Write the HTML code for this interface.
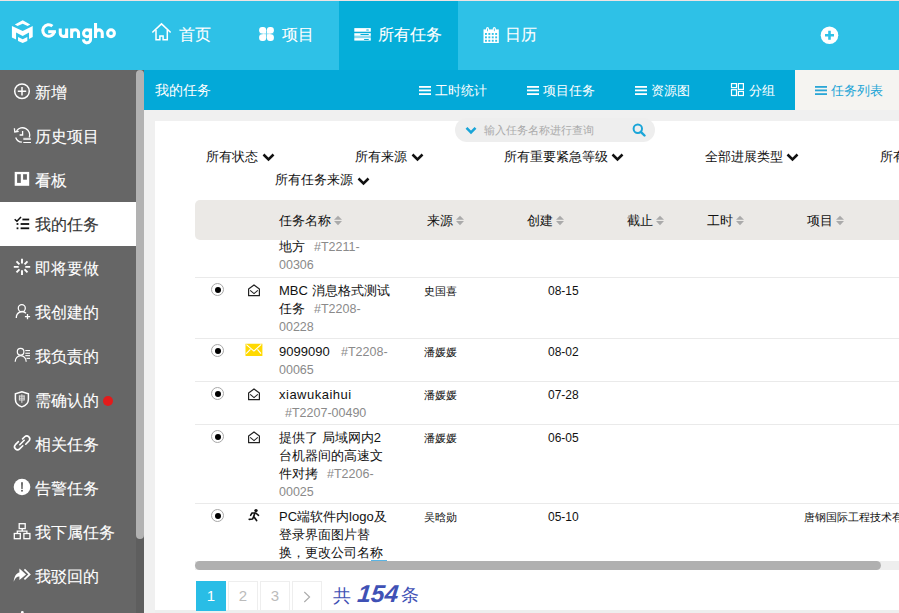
<!DOCTYPE html>
<html><head><meta charset="utf-8">
<style>
*{box-sizing:border-box}
html,body{margin:0;padding:0}
body{width:899px;height:613px;overflow:hidden;position:relative;background:#f0f0f0;font-family:"Liberation Sans",sans-serif;color:#333}
.abs{position:absolute}
#topline{left:0;top:0;width:899px;height:1px;background:#eee3e3}
#hdr{left:0;top:1px;width:899px;height:69px;background:#2ec1e7}
#hdr .act{position:absolute;left:339px;top:0;width:119px;height:69px;background:#05aed9}
.nav{position:absolute;color:#fff;font-size:16px;line-height:20px;white-space:nowrap}
#side{left:0;top:70px;width:136px;height:543px;background:#666}
#sbtrack{left:136px;top:70px;width:8px;height:543px;background:#5e5e5e}
#sbthumb{left:136px;top:70px;width:8px;height:469px;background:#b2b2b2;border-radius:4px}
.si{position:absolute;left:0;width:136px;height:44px;color:#fff;font-size:16px}
.si .t{position:absolute;left:35px;top:13px;line-height:20px;white-space:nowrap}
.si svg{position:absolute}
.si.on{background:#fff;color:#333}
#sub{left:144px;top:70px;width:755px;height:40px;background:#03a9d8}
.st{position:absolute;color:#fff;font-size:14px;line-height:20px;white-space:nowrap;top:10px}
#tabon{left:795px;top:70px;width:104px;height:40px;background:#f5f4f1}
#panel{left:155px;top:121px;width:744px;height:489px;background:#fff}
#search{left:455px;top:118px;width:200px;height:24px;border-radius:12px;background:#eeeeee}
.flt{position:absolute;font-size:13px;line-height:20px;color:#111;white-space:nowrap}
.flt svg{position:absolute}
#thead{left:195px;top:200px;width:720px;height:40px;border-radius:5px;background:#ebe9e6}
.th{position:absolute;top:211px;font-size:13px;line-height:20px;color:#111;white-space:nowrap}

.sep{position:absolute;left:195px;width:704px;height:1px;background:#eaeaea}
.tt{position:absolute;left:279px;font-size:13px;line-height:18px;color:#111;white-space:nowrap}
.tt.num{color:#8a8a8a;font-size:12.5px}
.src{position:absolute;left:424px;font-size:11px;line-height:16px;color:#111;white-space:nowrap}
.dt{position:absolute;left:548px;font-size:12px;line-height:16px;color:#111;white-space:nowrap}
.radio{position:absolute;left:211px;width:13px;height:13px;border-radius:50%;border:1px solid #a8a8a8;background:#fff}
.radio:after{content:"";position:absolute;left:2.5px;top:2.5px;width:6px;height:6px;border-radius:50%;background:#000}
.ic{position:absolute}
#hscroll{left:195px;top:561px;width:704px;height:9px;background:#eeeeee}
#hthumb{left:195px;top:561px;width:686px;height:9px;border-radius:4.5px;background:#b0b0b0}
.pg{position:absolute;top:581px;width:30px;height:30px;border:1px solid #eee;background:#fff;color:#bbb;font-size:15px;line-height:28px;text-align:center}
.pg.on{background:#29bde6;border-color:#29bde6;color:#fff}
#bottomstrip{left:155px;top:610px;width:744px;height:3px;background:#eeeeee}
.nav,.si .t{-webkit-text-stroke:0.1px currentColor}
.tt.num{-webkit-text-stroke:0}
.l{-webkit-text-stroke:0}
</style></head><body>
<div id="topline" class="abs"></div>
<div id="hdr" class="abs"><div class="act"></div></div>

<!-- logo -->
<svg class="abs" style="left:8px;top:16px" width="30" height="30" viewBox="0 0 613 613">
<polygon fill="#fff" points="140,175 300,85 455,175 400,205 300,160 195,205"/>
<polygon fill="#fff" points="80,205 300,305 505,205 505,430 430,470 430,335 300,410 165,335 165,480 80,440"/>
<polygon fill="#fff" points="205,430 300,475 395,430 395,510 300,550 205,510"/>
</svg>
<svg class="abs" style="left:0;top:0" width="130" height="60" viewBox="0 0 130 60"><g fill="none" stroke="#fff" stroke-width="3.05">
<path d="M52.4 26.2 A5.75 5.75 0 1 0 54.25 31.4"/><path d="M48.2 31.7 H55.9"/>
<path d="M60.25 28.4 V33.25 A3.2 3.2 0 0 0 66.65 33.25 M66.65 28.4 V38.1"/>
<path d="M71.65 38.1 V28.4 M71.65 33.2 A3.45 3.45 0 0 1 78.55 33.2 V38.1"/>
<circle cx="87.05" cy="33.2" r="3.5"/><path d="M90.55 28.4 V39.2 A3.55 3.55 0 0 1 83.45 39.4"/>
<path d="M95.55 23.1 V38.1 M95.55 33.2 A3.35 3.35 0 0 1 102.25 33.2 V38.1"/>
<circle cx="111" cy="33.2" r="3.4"/>
</g></svg>

<!-- nav -->
<svg class="abs" style="left:148px;top:19px" width="28" height="28" viewBox="0 0 28 28"><path d="M4.8 13 L13.5 4.9 L22.2 13" fill="none" stroke="#fff" stroke-width="1.6" stroke-linecap="round"/><path d="M8 11 V20.8 H11.9 V16.9 H15.1 V20.8 H19.3 V11" fill="none" stroke="#fff" stroke-width="1.5"/></svg>
<div class="nav" style="left:179px;top:25px">首页</div>
<svg class="abs" style="left:254px;top:22px" width="26" height="26" viewBox="0 0 26 26"><g fill="#fff"><rect x="5.1" y="4.9" width="7.1" height="6.7" rx="3"/><rect x="8.7" y="8.1" width="3.5" height="3.5"/><rect x="12.9" y="4.9" width="7" height="6.7" rx="3"/><rect x="12.9" y="8.1" width="3.5" height="3.5"/><rect x="5.1" y="12.2" width="7.1" height="6.7" rx="3"/><rect x="8.7" y="12.2" width="3.5" height="3.5"/><rect x="12.9" y="12.2" width="7" height="6.7" rx="3"/><rect x="12.9" y="12.2" width="3.5" height="3.5"/></g><rect x="5.1" y="11.6" width="14.8" height="0.6" fill="#fff" opacity="0.4"/></svg>
<div class="nav" style="left:282px;top:25px">项目</div>
<svg class="abs" style="left:349px;top:22px" width="26" height="26" viewBox="0 0 26 26"><g fill="#fff"><rect x="5.3" y="6.1" width="16.5" height="3.6"/><rect x="5.3" y="11.2" width="16.5" height="2.6"/><rect x="5.3" y="16.1" width="16.5" height="2.5"/><rect x="5.3" y="13.8" width="16.5" height="2.3" opacity="0.55"/></g><g fill="#05aed9"><rect x="17.2" y="7.5" width="2.7" height="1" rx="0.5"/><rect x="11.4" y="12" width="8.5" height="1" rx="0.5"/><rect x="15" y="16.9" width="4.9" height="1" rx="0.5"/></g></svg>
<div class="nav" style="left:378px;top:25px">所有任务</div>
<svg class="abs" style="left:478px;top:22px" width="26" height="26" viewBox="0 0 26 26"><g fill="#fff"><rect x="5.5" y="7.4" width="15.3" height="13.6"/><rect x="8" y="5" width="3" height="4.5" rx="1.5"/><rect x="14.8" y="5" width="3" height="4.5" rx="1.5"/></g><g fill="#2fc2e8"><rect x="9.1" y="6.3" width="0.8" height="3" rx="0.4"/><rect x="15.9" y="6.3" width="0.8" height="3" rx="0.4"/><rect x="7" y="11" width="1.9" height="1.9"/><rect x="10.4" y="11" width="1.9" height="1.9"/><rect x="13.8" y="11" width="1.9" height="1.9"/><rect x="17.2" y="11" width="1.9" height="1.9"/><rect x="7" y="14.4" width="1.9" height="1.9"/><rect x="10.4" y="14.4" width="1.9" height="1.9"/><rect x="13.8" y="14.4" width="1.9" height="1.9"/><rect x="17.2" y="14.4" width="1.9" height="1.9"/><rect x="7" y="17.8" width="1.9" height="1.9"/><rect x="10.4" y="17.8" width="1.9" height="1.9"/><rect x="13.8" y="17.8" width="1.9" height="1.9"/><rect x="17.2" y="17.8" width="1.9" height="1.9"/></g></svg>
<div class="nav" style="left:505px;top:25px">日历</div>
<svg class="abs" style="left:820px;top:26px" width="19" height="19" viewBox="0 0 19 19"><circle cx="9.5" cy="9.3" r="8.8" fill="#fff"/><path d="M9.5 4.8 V13.8 M5 9.3 H14" stroke="#2fc2e8" stroke-width="2.6"/></svg>

<!-- sidebar -->
<div id="side" class="abs">
<div class="si" style="top:0px"><svg style="left:10px;top:10px" width="24" height="24" viewBox="0 0 24 24"><circle cx="12" cy="11.2" r="7.3" fill="none" stroke="#fff" stroke-width="1.5"/><path d="M12 7 V15.4 M7.8 11.2 H16.2" stroke="#fff" stroke-width="1.5"/></svg><span class="t">新增</span></div>
<div class="si" style="top:44px"><svg style="left:10px;top:8px" width="24" height="24" viewBox="0 0 24 24"><path d="M6.56 8.84 A7.25 7.25 0 0 1 19.3 15.5" fill="none" stroke="#fff" stroke-width="1.3"/><path d="M5.69 15.48 A7.25 7.25 0 0 0 11.87 20.2" fill="none" stroke="#fff" stroke-width="1.3"/><path d="M4.4 6.3 L4.8 10 L8.7 9.3" fill="none" stroke="#fff" stroke-width="1.3"/><path d="M12.6 9 V13 H9.6" fill="none" stroke="#fff" stroke-width="1.3"/><rect x="13.3" y="15.8" width="7.5" height="2.2" fill="#d8d8d8"/><rect x="13.3" y="20" width="7.7" height="1" fill="#fff"/></svg><span class="t">历史项目</span></div>
<div class="si" style="top:88px"><svg style="left:10px;top:8px" width="24" height="24" viewBox="0 0 24 24"><rect x="4.7" y="5.9" width="14.5" height="13.9" fill="#fff"/><rect x="7.1" y="8.2" width="3.7" height="8.7" fill="#666"/><rect x="13.1" y="8.2" width="3.8" height="5.5" fill="#666"/></svg><span class="t">看板</span></div>
<div class="si on" style="top:132px"><svg style="left:10px;top:10px" width="24" height="24" viewBox="0 0 24 24"><path d="M4.7 7.3 L6.9 9.2 L11 4.9" fill="none" stroke="#111" stroke-width="1.5"/><rect x="6.6" y="11.1" width="1.8" height="1.8" fill="#111"/><rect x="6.6" y="15.4" width="1.8" height="1.8" fill="#111"/><rect x="12.4" y="6.6" width="6.8" height="1.8" fill="#111"/><rect x="10.6" y="11.1" width="8.6" height="1.8" fill="#111"/><rect x="10.6" y="15.4" width="8.6" height="1.8" fill="#111"/></svg><span class="t">我的任务</span></div>
<div class="si" style="top:176px"><svg style="left:10px;top:8px" width="24" height="24" viewBox="0 0 24 24"><g stroke="#fff" stroke-width="1.9" stroke-linecap="butt"><path d="M12 4.7 V9.6 M12 16.2 V21.1 M3.8 12.9 H8.7 M15.3 12.9 H20.2 M6.5 7.4 L9.45 10.35 M17.5 7.4 L14.55 10.35 M6.5 18.4 L9.45 15.45 M17.5 18.4 L14.55 15.45"/></g></svg><span class="t">即将要做</span></div>
<div class="si" style="top:220px"><svg style="left:10px;top:10px" width="24" height="24" viewBox="0 0 24 24"><circle cx="11.8" cy="8.2" r="3.5" fill="none" stroke="#fff" stroke-width="1.3"/><path d="M6.3 18 A5.8 6.3 0 0 1 16 13.2" fill="none" stroke="#fff" stroke-width="1.3"/><path d="M17.5 14 V19.2 M14.9 16.6 H20.1" stroke="#fff" stroke-width="1.3"/></svg><span class="t">我创建的</span></div>
<div class="si" style="top:264px"><svg style="left:10px;top:10px" width="24" height="24" viewBox="0 0 24 24"><circle cx="10.6" cy="7.7" r="3.3" fill="none" stroke="#fff" stroke-width="1.2"/><path d="M5.2 17.8 A5.5 6.2 0 0 1 16.2 17.8" fill="none" stroke="#fff" stroke-width="1.2"/><g fill="#fff"><rect x="15.3" y="6" width="4.7" height="1.1"/><rect x="15.3" y="8.7" width="4.7" height="1.1"/><rect x="15.3" y="11.1" width="4.7" height="1.1"/><rect x="16.5" y="13.8" width="3.5" height="1.1"/></g></svg><span class="t">我负责的</span></div>
<div class="si" style="top:308px"><svg style="left:10px;top:10px" width="24" height="24" viewBox="0 0 24 24"><path d="M11.8 3.7 L18.4 5.9 V11.3 C18.4 15.1 15 17.9 11.8 18.9 C8.6 17.9 5.4 15.1 5.4 11.3 V5.9 Z" fill="none" stroke="#fff" stroke-width="1.5"/><g fill="#d8d8d8"><rect x="8.9" y="7.5" width="5.8" height="1.2"/><rect x="8.9" y="7.5" width="1.1" height="4.6"/><rect x="13.6" y="7.5" width="1.1" height="4.6"/><rect x="8.9" y="9.7" width="5.8" height="1"/><rect x="8.9" y="11.5" width="5.8" height="1"/><rect x="11.3" y="6.3" width="1.1" height="8.5"/></g></svg><span class="t">需确认的</span><span style="position:absolute;left:103px;top:18px;width:10px;height:10px;border-radius:50%;background:#e31b1b"></span></div>
<div class="si" style="top:352px"><svg style="left:10px;top:10px" width="24" height="24" viewBox="0 0 24 24"><g fill="none" stroke="#fff" stroke-width="1.6" stroke-linecap="round"><path d="M8.4 9.66 L5.38 12.68 A3 3 0 0 0 9.62 16.92 L12.8 13.74"/><path d="M12.56 6.9 L14.68 4.78 A3 3 0 0 1 18.92 9.02 L15.74 12.2"/><path d="M9.8 12.7 L14.2 8.3"/></g></svg><span class="t">相关任务</span></div>
<div class="si" style="top:396px"><svg style="left:10px;top:10px" width="24" height="24" viewBox="0 0 24 24"><circle cx="12" cy="11" r="8.3" fill="#fff"/><path d="M11 6.2 H13 L12.7 13 H11.3 Z" fill="#666"/><circle cx="12" cy="14.8" r="1.05" fill="#666"/></svg><span class="t">告警任务</span></div>
<div class="si" style="top:440px"><svg style="left:10px;top:10px" width="24" height="24" viewBox="0 0 24 24"><g fill="none" stroke="#fff" stroke-width="1.3"><rect x="9.2" y="3.7" width="6" height="4.9"/><rect x="4.3" y="13.5" width="6" height="5.2"/><rect x="13.9" y="13.5" width="6" height="5.2"/><path d="M12.2 8.6 V11.1 M7.3 13.5 V11.1 H16.9 V13.5"/></g></svg><span class="t">我下属任务</span></div>
<div class="si" style="top:484px"><svg style="left:10px;top:8px" width="24" height="24" viewBox="0 0 24 24"><path d="M3.7 19.8 C4 14.5 6.5 10.8 9.4 10.4 V6.5 L16.1 12.4 L9.4 18 V14.5 C7 14.4 5 16 3.7 19.8 Z" fill="#fff"/><path d="M14.4 7.4 L19.6 12.4 L14.4 17.4" fill="none" stroke="#fff" stroke-width="1.7"/></svg><span class="t">我驳回的</span></div>
<div class="si" style="top:528px"><svg style="left:10px;top:8px" width="24" height="24" viewBox="0 0 24 24"><circle cx="12.3" cy="6.3" r="1.4" fill="#fff"/></svg><span class="t"></span></div>
</div>
<div id="sbtrack" class="abs"></div>
<div id="sbthumb" class="abs"></div>

<!-- subheader -->
<div id="sub" class="abs"></div>
<div id="tabon" class="abs"></div>
<div class="st" style="left:155px;top:80px">我的任务</div>
<svg class="abs" style="left:419px;top:86px" width="12" height="10" viewBox="0 0 12 10"><g fill="#fff"><rect x="0" y="0" width="12" height="1.8"/><rect x="0" y="3.5" width="12" height="1.8"/><rect x="0" y="7.2" width="12" height="1.8"/></g></svg><div class="st" style="left:435px;top:81px;font-size:13px">工时统计</div>
<svg class="abs" style="left:527px;top:86px" width="12" height="10" viewBox="0 0 12 10"><g fill="#fff"><rect x="0" y="0" width="12" height="1.8"/><rect x="0" y="3.5" width="12" height="1.8"/><rect x="0" y="7.2" width="12" height="1.8"/></g></svg><div class="st" style="left:543px;top:81px;font-size:13px">项目任务</div>
<svg class="abs" style="left:635px;top:86px" width="12" height="10" viewBox="0 0 12 10"><g fill="#fff"><rect x="0" y="0" width="12" height="1.8"/><rect x="0" y="3.5" width="12" height="1.8"/><rect x="0" y="7.2" width="12" height="1.8"/></g></svg><div class="st" style="left:651px;top:81px;font-size:13px">资源图</div>
<svg class="abs" style="left:730px;top:82px" width="15" height="15" viewBox="0 0 15 15"><g fill="none" stroke="#fff" stroke-width="1.2"><rect x="1.5" y="1.6" width="5" height="4"/><rect x="1.5" y="7.7" width="5" height="5.8"/><rect x="8.4" y="1.6" width="5" height="5.8"/><rect x="8.4" y="9.4" width="5" height="4.1"/></g></svg><div class="st" style="left:749px;top:81px;font-size:13px">分组</div>
<svg class="abs" style="left:815px;top:86px" width="12" height="10" viewBox="0 0 12 10"><g fill="#2aa6d6"><rect x="0" y="0" width="12" height="1.8"/><rect x="0" y="3.5" width="12" height="1.8"/><rect x="0" y="7.2" width="12" height="1.8"/></g></svg><div class="st" style="left:831px;top:81px;font-size:13px;color:#1ea5d6">任务列表</div>

<div id="panel" class="abs"></div>
<div id="search" class="abs"></div>
<svg class="abs" style="left:465px;top:126px" width="12" height="9" viewBox="0 0 12 9"><path d="M1.5 1.8 L6 6.3 L10.5 1.8" fill="none" stroke="#1aa5d8" stroke-width="2.6"/></svg>
<div class="abs" style="left:484px;top:121px;font-size:11px;line-height:18px;color:#aaa;white-space:nowrap">输入任务名称进行查询</div>
<svg class="abs" style="left:632px;top:123px" width="14" height="14" viewBox="0 0 14 14"><circle cx="5.8" cy="5.8" r="4.2" fill="none" stroke="#1aa5d8" stroke-width="2"/><path d="M8.8 8.8 L12.5 12.5" stroke="#1aa5d8" stroke-width="2.4" stroke-linecap="round"/></svg>
<div class="flt" style="left:206px;top:147px">所有状态</div><svg class="abs" style="left:262px;top:153px" width="13" height="9" viewBox="0 0 13 9"><path d="M1.5 1.5 L6.5 6.5 L11.5 1.5" fill="none" stroke="#111" stroke-width="2.5"/></svg>
<div class="flt" style="left:355px;top:147px">所有来源</div><svg class="abs" style="left:411px;top:153px" width="13" height="9" viewBox="0 0 13 9"><path d="M1.5 1.5 L6.5 6.5 L11.5 1.5" fill="none" stroke="#111" stroke-width="2.5"/></svg>
<div class="flt" style="left:504px;top:147px">所有重要紧急等级</div><svg class="abs" style="left:611px;top:153px" width="13" height="9" viewBox="0 0 13 9"><path d="M1.5 1.5 L6.5 6.5 L11.5 1.5" fill="none" stroke="#111" stroke-width="2.5"/></svg>
<div class="flt" style="left:705px;top:147px">全部进展类型</div><svg class="abs" style="left:786px;top:153px" width="13" height="9" viewBox="0 0 13 9"><path d="M1.5 1.5 L6.5 6.5 L11.5 1.5" fill="none" stroke="#111" stroke-width="2.5"/></svg>
<div class="flt" style="left:880px;top:147px">所有任务</div>
<div class="flt" style="left:275px;top:170px">所有任务来源</div><svg class="abs" style="left:357px;top:177px" width="13" height="9" viewBox="0 0 13 9"><path d="M1.5 1.5 L6.5 6.5 L11.5 1.5" fill="none" stroke="#111" stroke-width="2.5"/></svg>


<div id="tbody" class="abs" style="left:0;top:240px;width:899px;height:321px;overflow:hidden"><div class="abs" style="left:0;top:-240px;width:899px;height:613px"><div class="tt" style="left:279px;top:238px;">地方</div><div class="tt num" style="left:314px;top:238px">#T2211-</div><div class="tt num" style="left:279px;top:256px">00306</div>
<div class="sep" style="top:277px"></div><div class="radio" style="top:283px"></div><svg class="abs" style="left:246px;top:284px" width="16" height="14" viewBox="0 0 16 14"><path d="M2.6 4.9 L8 0.9 L13.4 4.9 V11.7 H2.6 Z" fill="none" stroke="#222" stroke-width="1.2" stroke-linejoin="round"/><path d="M4.2 6.4 L8 9.6 L11.8 6.4" fill="none" stroke="#222" stroke-width="1.1"/></svg><div class="tt" style="left:279px;top:282px;"><span class="l">MBC </span>消息格式测试</div><div class="tt" style="left:279px;top:300px;">任务</div><div class="tt num" style="left:314px;top:300px">#T2208-</div><div class="tt num" style="left:279px;top:318px">00228</div><div class="src" style="top:283px">史国喜</div><div class="dt" style="top:283px">08-15</div>
<div class="sep" style="top:338px"></div><div class="radio" style="top:344px"></div><svg class="abs" style="left:245px;top:343px" width="18" height="14" viewBox="0 0 18 14"><rect x="0.5" y="0.75" width="16.9" height="12.25" fill="#ffd900"/><path d="M1.4 1.6 L8.9 8.1 L16.3 1.3 M1.2 10.7 L5.4 6.3 M16 10.7 L12.5 6.3" fill="none" stroke="#fff" stroke-width="1.1"/></svg><div class="tt" style="left:279px;top:343px;"><span class="l">9099090</span></div><div class="tt num" style="left:341px;top:343px">#T2208-</div><div class="tt num" style="left:279px;top:361px">00065</div><div class="src" style="top:344px">潘媛媛</div><div class="dt" style="top:344px">08-02</div>
<div class="sep" style="top:381px"></div><div class="radio" style="top:387px"></div><svg class="abs" style="left:246px;top:388px" width="16" height="14" viewBox="0 0 16 14"><path d="M2.6 4.9 L8 0.9 L13.4 4.9 V11.7 H2.6 Z" fill="none" stroke="#222" stroke-width="1.2" stroke-linejoin="round"/><path d="M4.2 6.4 L8 9.6 L11.8 6.4" fill="none" stroke="#222" stroke-width="1.1"/></svg><div class="tt" style="left:279px;top:386px;letter-spacing:0.5px"><span class="l">xiawukaihui</span></div><div class="tt num" style="left:285px;top:404px">#T2207-00490</div><div class="src" style="top:387px">潘媛媛</div><div class="dt" style="top:387px">07-28</div>
<div class="sep" style="top:424px"></div><div class="radio" style="top:430px"></div><svg class="abs" style="left:246px;top:431px" width="16" height="14" viewBox="0 0 16 14"><path d="M2.6 4.9 L8 0.9 L13.4 4.9 V11.7 H2.6 Z" fill="none" stroke="#222" stroke-width="1.2" stroke-linejoin="round"/><path d="M4.2 6.4 L8 9.6 L11.8 6.4" fill="none" stroke="#222" stroke-width="1.1"/></svg><div class="tt" style="left:279px;top:429px;">提供了 局域网内<span class="l">2</span></div><div class="tt" style="left:279px;top:447px;">台机器间的高速文</div><div class="tt" style="left:279px;top:465px;">件对拷</div><div class="tt num" style="left:327px;top:465px">#T2206-</div><div class="tt num" style="left:279px;top:483px">00025</div><div class="src" style="top:430px">潘媛媛</div><div class="dt" style="top:430px">06-05</div>
<div class="sep" style="top:503px"></div><div class="radio" style="top:509px"></div><svg class="abs" style="left:242px;top:505px" width="24" height="20" viewBox="0 0 24 20"><circle cx="14" cy="5.6" r="1.7" fill="#111"/><path d="M8.6 10.3 L10 8 L13.8 8 L16.5 10.3" fill="none" stroke="#111" stroke-width="1.6" stroke-linejoin="round" stroke-linecap="round"/><path d="M12.8 8.3 L11.7 11.5 L10.6 14 L7.2 14.3 M11.7 11.5 L14.6 15.5" fill="none" stroke="#111" stroke-width="1.7" stroke-linejoin="round" stroke-linecap="round"/></svg><div class="tt" style="left:279px;top:508px;"><span class="l">PC</span>端软件内<span class="l">logo</span>及</div><div class="tt" style="left:279px;top:526px;">登录界面图片替</div><div class="tt" style="left:279px;top:544px;">换，更改公司名称</div><div class="src" style="top:509px">吴晗勋</div><div class="dt" style="top:509px">05-10</div><div class="src" style="left:804px;top:509px">唐钢国际工程技术有限公司</div></div></div>
<div id="thead" class="abs"></div>
<div class="th" style="left:279px">任务名称</div><svg class="abs" style="left:333px;top:215px" width="10" height="12" viewBox="0 0 10 12"><path d="M1 4.8 L5 0.8 L9 4.8 Z M1 5.9 L5 10.3 L9 5.9 Z" fill="#aaa"/></svg>
<div class="th" style="left:427px">来源</div><svg class="abs" style="left:455px;top:215px" width="10" height="12" viewBox="0 0 10 12"><path d="M1 4.8 L5 0.8 L9 4.8 Z M1 5.9 L5 10.3 L9 5.9 Z" fill="#aaa"/></svg>
<div class="th" style="left:527px">创建</div><svg class="abs" style="left:555px;top:215px" width="10" height="12" viewBox="0 0 10 12"><path d="M1 4.8 L5 0.8 L9 4.8 Z M1 5.9 L5 10.3 L9 5.9 Z" fill="#aaa"/></svg>
<div class="th" style="left:627px">截止</div><svg class="abs" style="left:655px;top:215px" width="10" height="12" viewBox="0 0 10 12"><path d="M1 4.8 L5 0.8 L9 4.8 Z M1 5.9 L5 10.3 L9 5.9 Z" fill="#aaa"/></svg>
<div class="th" style="left:707px">工时</div><svg class="abs" style="left:735px;top:215px" width="10" height="12" viewBox="0 0 10 12"><path d="M1 4.8 L5 0.8 L9 4.8 Z M1 5.9 L5 10.3 L9 5.9 Z" fill="#aaa"/></svg>
<div class="th" style="left:807px">项目</div><svg class="abs" style="left:835px;top:215px" width="10" height="12" viewBox="0 0 10 12"><path d="M1 4.8 L5 0.8 L9 4.8 Z M1 5.9 L5 10.3 L9 5.9 Z" fill="#aaa"/></svg>
<div class="abs" style="left:371px;top:560px;width:16px;height:1px;background:#5ab4e4"></div>
<div id="hscroll" class="abs"></div><div id="hthumb" class="abs"></div>
<div id="bottomstrip" class="abs"></div>
<div class="pg on" style="left:196px">1</div>
<div class="pg" style="left:228px">2</div>
<div class="pg" style="left:260px">3</div>
<div class="pg" style="left:292px"></div><svg class="abs" style="left:292px;top:581px" width="30" height="30" viewBox="0 0 30 30"><path d="M12.3 11 L17.6 16 L12.3 21" fill="none" stroke="#aaa" stroke-width="1.1"/></svg>
<div class="abs" style="left:333px;top:584px;font-size:18px;line-height:24px;color:#3f51b5">共</div>
<div class="abs" style="left:356px;top:580px;font-size:24.5px;line-height:28px;color:#3f51b5;font-weight:bold;font-style:italic;transform:skewX(-6deg);transform-origin:0 100%">154</div>
<div class="abs" style="left:401px;top:583px;font-size:18px;line-height:24px;color:#3f51b5">条</div>
</body></html>
